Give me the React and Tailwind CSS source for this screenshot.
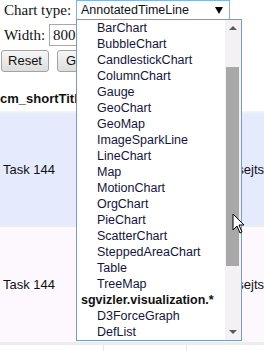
import React from "react";

const items = [
  { t: "BarChart" },
  { t: "BubbleChart" },
  { t: "CandlestickChart" },
  { t: "ColumnChart" },
  { t: "Gauge" },
  { t: "GeoChart" },
  { t: "GeoMap" },
  { t: "ImageSparkLine" },
  { t: "LineChart" },
  { t: "Map" },
  { t: "MotionChart" },
  { t: "OrgChart" },
  { t: "PieChart" },
  { t: "ScatterChart" },
  { t: "SteppedAreaChart" },
  { t: "Table" },
  { t: "TreeMap" },
  { t: "sgvizler.visualization.*", g: true },
  { t: "D3ForceGraph" },
  { t: "DefList" },
];

export default function App() {
  return (
    <div className="relative w-[264px] h-[351px] overflow-hidden bg-white text-[#111]">
      {/* form */}
      <div className="flex flex-col">
        <div className="flex h-[20px] items-center">
          <span className="pl-[4px] w-[76px] font-['Liberation_Serif',serif] text-[15px] leading-[20px]">
            Chart type:
          </span>
          <div className="flex h-[20px] w-[154px] items-center justify-between border border-[#7eb4ea] bg-white pl-[4px] pr-[6px] font-['Liberation_Sans',Arial,sans-serif] text-[12.5px]">
            <span>AnnotatedTimeLine</span>
            <div className="h-0 w-0 border-x-[4px] border-t-[7px] border-x-transparent border-t-black" />
          </div>
        </div>
        <div className="mt-[4px] flex h-[22px] items-center">
          <span className="pl-[4px] w-[49px] font-['Liberation_Serif',serif] text-[15px]">Width:</span>
          <div className="flex h-[22px] w-[80px] items-center border border-[#a9a9a9] pl-[3px] font-['Liberation_Serif',serif] text-[15px]">
            800
          </div>
        </div>
        <div className="mt-[4px] flex gap-[8px] pl-[1px] font-['Liberation_Sans',Arial,sans-serif] text-[13px]">
          <div className="flex h-[22px] w-[48px] items-center justify-center rounded-[3px] border border-[#a3a3a3] bg-gradient-to-b from-[#f7f7f7] to-[#dddddd]">
            Reset
          </div>
          <div className="flex h-[22px] w-[60px] items-center pl-[8px] rounded-[3px] border border-[#a3a3a3] bg-gradient-to-b from-[#f7f7f7] to-[#dddddd]">
            Go
          </div>
        </div>
      </div>

      {/* table */}
      <div className="mt-[15px] flex flex-col font-['Liberation_Sans',Arial,sans-serif] text-[13px]">
        <div className="flex h-[24px] items-center font-bold">
          <span>cm_shortTitle</span>
        </div>
        <div className="h-[3px] bg-gradient-to-b from-[#f4f6fc] to-[#e6ebfb]" />
        <div className="flex h-[111px] items-center bg-[#e5eafd]">
          <span className="pl-[3px] w-[244px]">Task 144</span>
          <span>sejts</span>
        </div>
        <div className="h-[2px] bg-[#ececec]" />
        <div className="flex h-[115px] items-center bg-[#fdf8fd]">
          <span className="pl-[3px] w-[244px]">Task 144</span>
          <span>sejts</span>
        </div>
        <div className="h-[3px] bg-[#ececec]" />
        <div className="flex h-[10px]">
          <div className="w-[104px] border-r border-[#e6e6e6]" />
          <div className="w-[83px] border-r border-[#e6e6e6]" />
        </div>
      </div>

      {/* open dropdown */}
      <div className="absolute left-[76px] top-[19px] flex h-[322px] w-[166px] border border-[#7a9cc0] bg-white">
        <div className="flex-1 overflow-hidden font-['Liberation_Sans',Arial,sans-serif] text-[12.5px] leading-[16px] text-[#14143c]">
          {items.map((it) =>
            it.g ? (
              <div key={it.t} className="h-[16px] pl-[4px] font-bold text-[#111]">
                {it.t}
              </div>
            ) : (
              <div key={it.t} className="h-[16px] pl-[20px]">
                {it.t}
              </div>
            )
          )}
        </div>
        <div className="flex w-[16px] flex-col bg-[#f4f1f4]">
          <div className="flex h-[16px] items-center justify-center">
            <div className="h-0 w-0 border-x-[4px] border-b-[4px] border-x-transparent border-b-[#5a5a5a]" />
          </div>
          <div className="ml-[1px] mt-[31px] h-[199px] w-[13px] bg-[#a8a8a8]" />
          <div className="flex-1" />
          <div className="flex h-[16px] items-center justify-center">
            <div className="h-0 w-0 border-x-[4px] border-t-[4px] border-x-transparent border-t-[#5a5a5a]" />
          </div>
        </div>
      </div>

      {/* cursor */}
      <svg className="absolute left-[232px] top-[213px]" width="14" height="22" viewBox="0 0 14 22">
        <path d="M1 1 L1 17 L5 13 L8 20 L10 19 L7 12 L12 12 Z" fill="white" stroke="black" strokeWidth="1" />
      </svg>
    </div>
  );
}
